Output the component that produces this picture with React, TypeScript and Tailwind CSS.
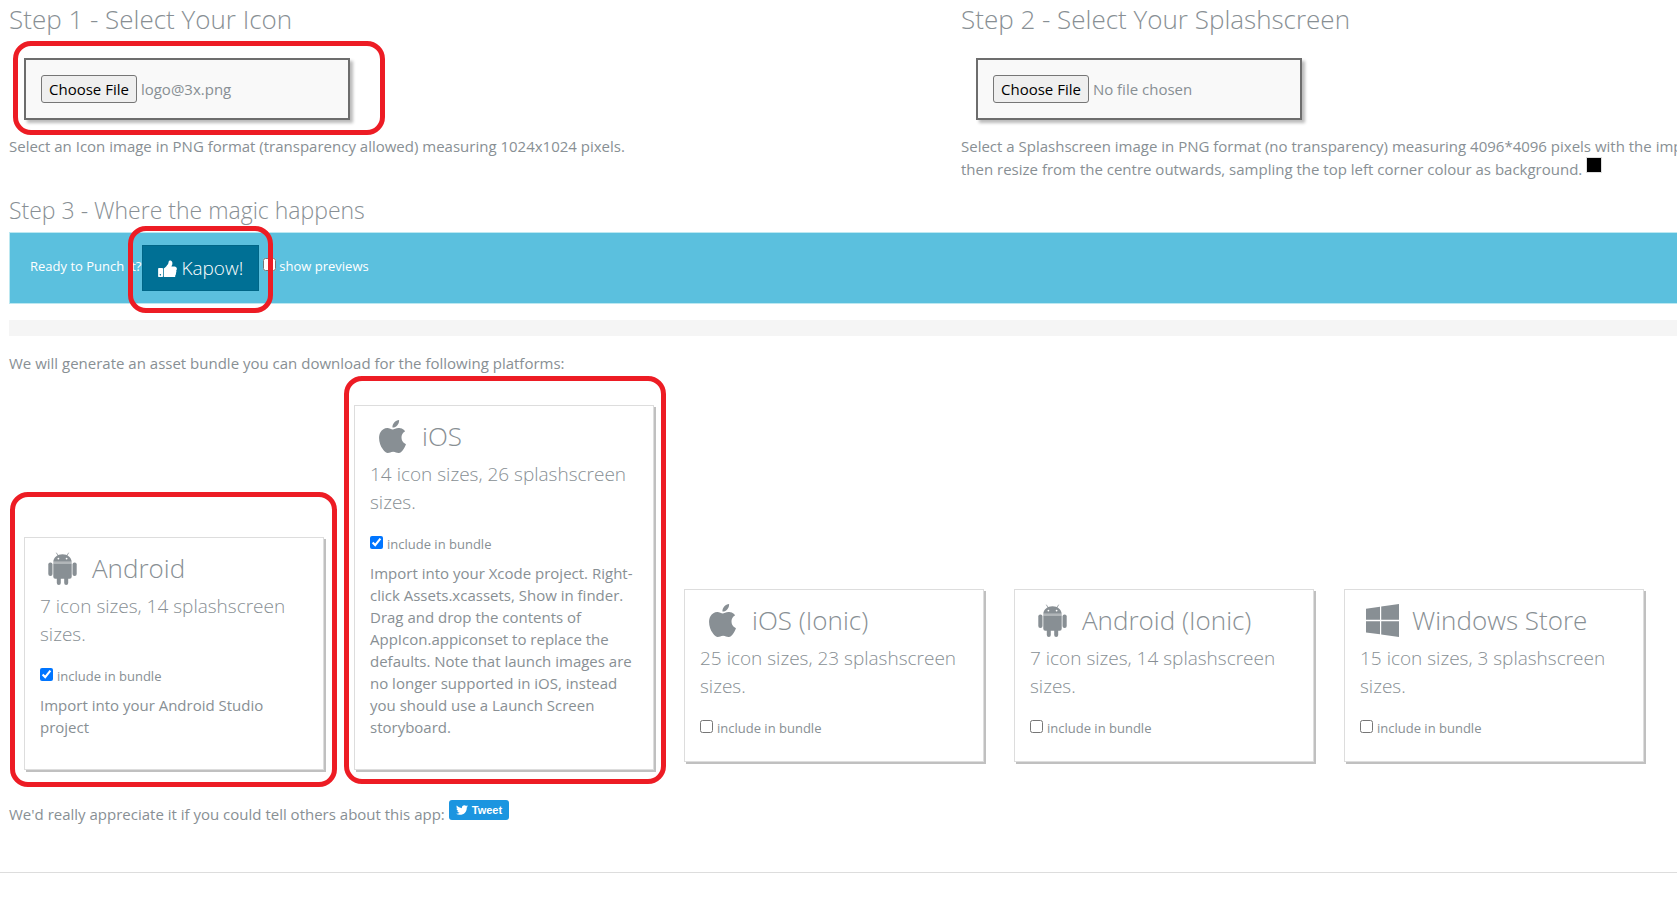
import React, { useId } from "react";
import { FaTwitter } from "react-icons/fa";
import { ImAppleinc } from "react-icons/im";

type IconProps = { className?: string };

function ThumbIcon({ className }: IconProps) {
  return (
    <svg viewBox="64 0 1600 1536" fill="currentColor" aria-hidden="true" className={className}>
      <path d="M320 1344q0-26-19-45t-45-19q-27 0-45.500 19t-18.500 45q0 27 18.500 45.500t45.500 18.500q26 0 45-18.500t19-45.500zm160-512v640q0 26-19 45t-45 19h-288q-26 0-45-19t-19-45v-640q0-26 19-45t45-19h288q26 0 45 19t19 45zm1184 0q0 86-55 149 15 44 15 76 3 76-43 137 17 56 0 117-15 57-54 94 9 112-49 181-64 76-197 78h-129q-66 0-144-15.500t-121.500-29-120.500-39.500q-123-43-158-44-26-1-45-19.500t-19-44.500v-641q0-25 18-43.500t43-20.500q24-2 76-59t101-121q68-87 101-120 18-18 31-48t17.500-48.500 13.500-60.500q7-39 12.500-61t19.500-52 34-50q19-19 45-19 46 0 82.500 10.500t60 26 40 40.500 24 45 12 50 5 45 .5 39q0 38-9.500 76t-19 60-27.500 56q-3 6-10 18t-11 22-8 24h277q78 0 135 57t57 135z" />
    </svg>
  );
}

function AndroidIcon({ className }: IconProps) {
  return (
    <svg viewBox="0 0 33 33" fill="currentColor" aria-hidden="true" className={className}>
      <path d="M10.300 .7 12.300 4M22.700 .7 20.700 4" stroke="currentColor" strokeWidth=".8" fill="none" />
      <path
        fillRule="evenodd"
        d="M7.300 9.800C7.600 5.400 11.300 2.200 16.500 2.200S25.400 5.400 25.700 9.800ZM12.400 5.700a.9.900 0 1 0 0 1.800.9.900 0 0 0 0-1.800ZM20.600 5.700a.9.900 0 1 0 0 1.800.9.900 0 0 0 0-1.800Z"
      />
      <path d="M7.300 9.800h18.400v1.700H7.300z" opacity=".65" />
      <path d="M7.300 11.500h18.400v13.200a2 2 0 0 1-2 2h-1.500v4.200a2 2 0 0 1-4 0v-4.200h-3.400v4.200a2 2 0 0 1-4 0v-4.200H9.300a2 2 0 0 1-2-2Z" />
      <rect x="2.300" y="10.500" width="4.200" height="13.500" rx="2" />
      <rect x="26.500" y="10.500" width="4.200" height="13.500" rx="2" />
    </svg>
  );
}

function WindowsIcon({ className }: IconProps) {
  return (
    <svg viewBox="0 0 33 33" fill="currentColor" aria-hidden="true" className={className}>
      <path d="M0 4.700 14 2.800V15.700H0ZM15.200 2.600 33 0V15.700H15.200ZM0 17.200H14V30.300L0 28.400ZM15.200 17.200H33V33L15.200 30.500Z" />
    </svg>
  );
}

function Highlight({ className }: { className: string }) {
  return (
    <span
      aria-hidden="true"
      className={`pointer-events-none absolute z-10 rounded-[18px] border-5 border-[#ed1c24] ${className}`}
    />
  );
}

function FileBox({ label, fileName, highlighted }: { label: string; fileName?: string; highlighted?: boolean }) {
  const fill = (input: HTMLInputElement | null) => {
    if (!input || !fileName || input.files?.length) return;
    const transfer = new DataTransfer();
    transfer.items.add(new File([""], fileName, { type: "image/png" }));
    input.files = transfer.files;
  };
  return (
    <div className="relative mt-5 ml-[15px] w-[326px]">
      <input
        ref={fill}
        type="file"
        accept="image/png"
        aria-label={label}
        className="block w-full border-2 border-[#6d6d6d] bg-[#f9f9f9] p-[15px] text-[15px] leading-[22px] shadow-[3px_3px_3px_#bbb] file:h-7 file:rounded-[3px] file:border file:border-solid file:border-[#767676] file:bg-[#efefef] file:px-[7px] file:text-black"
      />
      {highlighted && <Highlight className="-top-[17px] -right-[35px] -bottom-[15px] -left-[11px]" />}
    </div>
  );
}

type Platform = {
  name: string;
  icon: React.ComponentType<IconProps>;
  sizes: string;
  note?: string;
  checked?: boolean;
  highlight?: string;
};

const platforms: Platform[] = [
  {
    name: "Android",
    icon: AndroidIcon,
    sizes: "7 icon sizes, 14 splashscreen sizes.",
    note: "Import into your Android Studio project",
    checked: true,
    highlight: "-top-[45px] -right-[13px] -bottom-[17px] -left-[14px]",
  },
  {
    name: "iOS",
    icon: ImAppleinc,
    sizes: "14 icon sizes, 26 splashscreen sizes.",
    note: "Import into your Xcode project. Right-click Assets.xcassets, Show in finder. Drag and drop the contents of AppIcon.appiconset to replace the defaults. Note that launch images are no longer supported in iOS, instead you should use a Launch Screen storyboard.",
    checked: true,
    highlight: "-top-[29px] -right-[12px] -bottom-[14px] -left-[10px]",
  },
  { name: "iOS (Ionic)", icon: ImAppleinc, sizes: "25 icon sizes, 23 splashscreen sizes." },
  { name: "Android (Ionic)", icon: AndroidIcon, sizes: "7 icon sizes, 14 splashscreen sizes." },
  { name: "Windows Store", icon: WindowsIcon, sizes: "15 icon sizes, 3 splashscreen sizes." },
];

function PlatformCard({ name, icon: Icon, sizes, note, checked, highlight }: Platform) {
  const id = useId();
  return (
    <article className="relative w-[300px] shrink-0">
      <div className="border border-[#ddd] px-[15px] pt-3 shadow-[2px_2px_0_#c0c0c0]">
        <h3 className="flex items-center gap-[13px] pl-[6px] text-[26px] leading-9 font-light">
          <Icon className="size-[33px]" />
          {name}
        </h3>
        <p className="mt-[6px] text-[19px] leading-7 font-light">{sizes}</p>
        <div className={`mt-[18px] flex items-start gap-1 text-[13px] leading-5 ${note ? "" : "mb-[23px]"}`}>
          <input id={id} type="checkbox" defaultChecked={checked} className="mt-[2px] size-[13px]" />
          <label htmlFor={id}>include in bundle</label>
        </div>
        {note && <p className="mt-2 mb-[31px] text-[15px] leading-[22px]">{note}</p>}
      </div>
      {highlight && <Highlight className={highlight} />}
    </article>
  );
}

export default function App() {
  return (
    <div className="min-h-screen overflow-hidden bg-white font-['Open_Sans','Liberation_Sans',sans-serif] text-[15px] leading-[23px] text-[#888f94]">
      <main className="pl-[9px]">
        <div className="flex">
          <section className="w-[952px] shrink-0">
            <h2 className="text-[26px] leading-[38px] font-light">Step 1 - Select Your Icon</h2>
            <FileBox label="Icon image" fileName="logo@3x.png" highlighted />
            <p className="mt-[15px]">Select an Icon image in PNG format (transparency allowed) measuring 1024x1024 pixels.</p>
          </section>
          <section className="shrink-0">
            <h2 className="text-[26px] leading-[38px] font-light">Step 2 - Select Your Splashscreen</h2>
            <FileBox label="Splashscreen image" />
            <p className="mt-[15px] whitespace-nowrap">
              Select a Splashscreen image in PNG format (no transparency) measuring 4096*4096 pixels with the important
              <br />
              then resize from the centre outwards, sampling the top left corner colour as background.{" "}
              <span className="-mt-1 inline-block size-4 border border-[#ddd] bg-black align-[2px]" />
            </p>
          </section>
        </div>

        <h2 className="mt-[11px] text-[23px] leading-9 font-light">Step 3 - Where the magic happens</h2>
        <div className="mt-1 flex h-[72px] items-center border border-r-0 border-[#bce8f1] bg-[#5bc0de] pl-5 text-[13px] leading-5 text-white">
          <span className="mb-1">Ready to Punch It?</span>
          <div className="relative ml-px">
            <button
              type="button"
              className="flex h-[46px] items-center gap-1 border border-[#006687] bg-[#007095] px-[15px] text-[19px] font-light"
            >
              <ThumbIcon className="mb-px h-[18px] w-[19px]" />
              Kapow!
            </button>
            <Highlight className="-top-[19px] -right-[14px] -bottom-[22px] -left-[14px]" />
          </div>
          <label className="mb-1 ml-1 flex items-start gap-[3px]">
            <input type="checkbox" className="mt-[2px] size-[13px]" />
            show previews
          </label>
        </div>
        <div className="mt-4 h-4 bg-[#f5f5f5]" />

        <p className="mt-4">We will generate an asset bundle you can download for the following platforms:</p>
        <div className="mt-[30px] flex gap-[30px] pl-[15px] [align-items:last_baseline]">
          {platforms.map((platform) => (
            <PlatformCard key={platform.name} {...platform} />
          ))}
        </div>

        <div className="mt-[30px] flex items-start gap-1">
          <p className="mt-[3px]">We'd really appreciate it if you could tell others about this app:</p>
          <a
            href="#tweet"
            className="flex h-5 items-center gap-1 rounded-[3px] bg-[#1b95e0] px-[7px] font-['Liberation_Sans',sans-serif] text-[11px] font-bold text-white"
          >
            <FaTwitter className="size-3" />
            Tweet
          </a>
        </div>
      </main>
      <hr className="mt-[46px] border-[#ddd]" />
    </div>
  );
}
